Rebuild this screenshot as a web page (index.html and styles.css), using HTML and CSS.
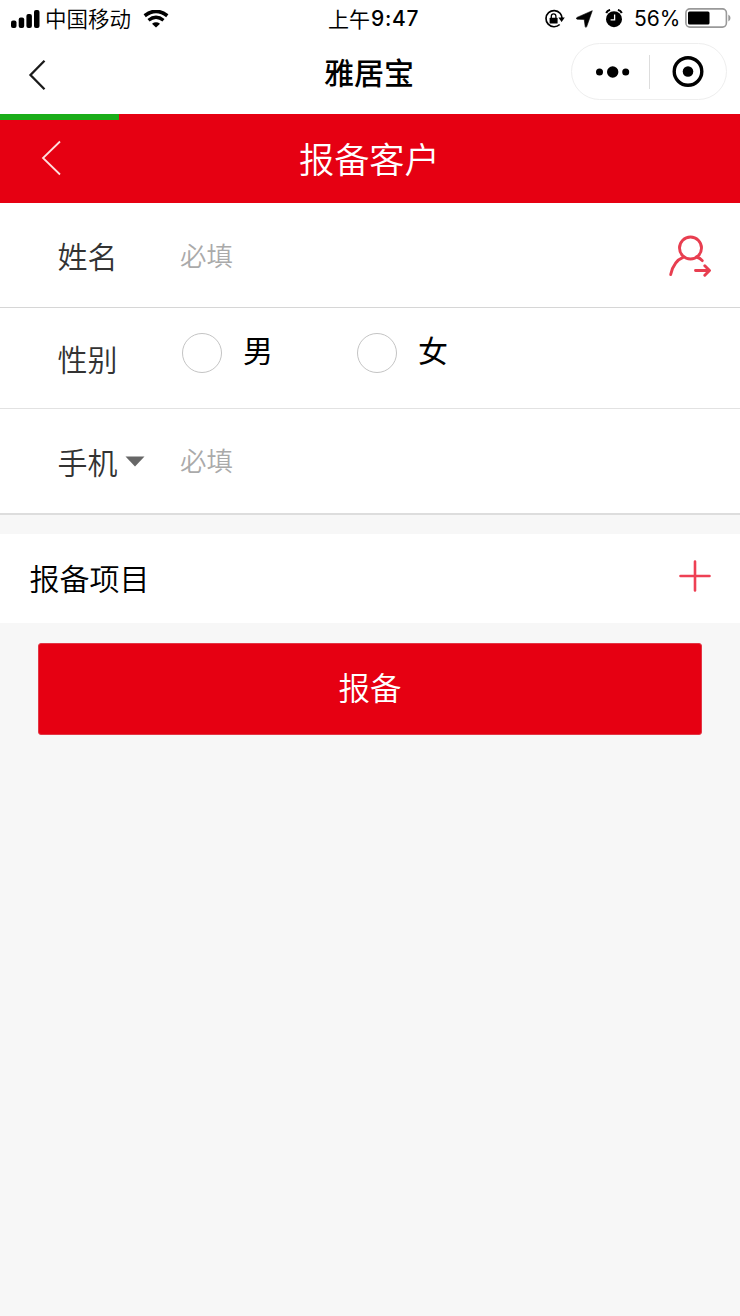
FILE: index.html
```
<!DOCTYPE html>
<html lang="zh-CN">
<head>
<meta charset="utf-8">
<title>雅居宝</title>
<link rel="stylesheet" href="styles.css">
</head>
<body>
<header class="status">
  <div class="status-left">
    <svg class="signal" width="29" height="18" viewBox="0 0 29 18"><rect x="0" y="10.500" width="5.500" height="7.500" rx="2"/><rect x="7.700" y="7.500" width="5.500" height="10.500" rx="2"/><rect x="15.400" y="4" width="5.500" height="14" rx="2"/><rect x="23" y="0" width="5.500" height="18" rx="2"/></svg>
    <span class="carrier">中国移动</span>
    <svg class="wifi" width="26" height="18" viewBox="0 0 26 18"><path d="M1.700 5.700Q13 -3 24.300 5.700" fill="none" stroke="#000" stroke-width="3.600"/><path d="M5.500 10.300Q13 4.200 20.500 10.300" fill="none" stroke="#000" stroke-width="3.300"/><path d="M13 17.600L9 13.700Q13 10.900 17 13.700Z"/></svg>
  </div>
  <div class="clock"><span class="clock-period">上午</span><span class="clock-time">9:47</span></div>
  <div class="status-right">
    <svg class="rotation" width="21" height="20" viewBox="0 0 21 20"><path d="M16.100 4.200A8.100 8.100 0 1 0 15.700 15.500M16.100 4.200A8.100 8.100 0 0 1 18 9" fill="none" stroke="#000" stroke-width="1.700"/><path d="M14.400 8.600H20.800L17.600 13Z"/><rect x="5.600" y="8.700" width="8" height="5.900" rx=".7"/><path d="M7.300 9V7.200a2.300 2.300 0 0 1 4.600 0V9" fill="none" stroke="#000" stroke-width="1.300"/></svg>
    <svg class="locator" width="17" height="18" viewBox="0 0 17 18"><path d="M16.300 .7L10.700 16.600Q9.900 18.200 9.200 16.600L8.200 9.400L1.200 9.200Q-.6 8.600 1 7.400Z" stroke="#000" stroke-width=".6"/></svg>
    <svg class="alarm" width="18" height="19" viewBox="0 0 18 19"><circle cx="9" cy="10.200" r="8"/><path d="M1.200 4Q2.300 1.700 5.100 .9M16.800 4Q15.700 1.700 12.900 .9" fill="none" stroke="#000" stroke-width="2"/><path d="M9.600 5.600V10.800H5.600" fill="none" stroke="#fff" stroke-width="1.300"/></svg>
    <span class="percent">56%</span>
    <svg class="battery" width="46" height="20" viewBox="0 0 46 20"><rect x=".9" y=".9" width="40.500" height="18.200" rx="4" fill="#fff" stroke="#999" stroke-width="1.600"/><rect x="3" y="3.500" width="21.500" height="13" rx="1.500"/><path d="M43.300 6.500Q45.500 7.500 45.500 10T43.300 13.500Z" fill="#999"/></svg>
  </div>
</header>

<nav class="appbar">
  <svg class="back" width="20" height="32" viewBox="0 0 20 32"><path d="M16.500 1.700L2.500 16L16.500 30.300" fill="none" stroke="#1a1a1a" stroke-width="2.300"/></svg>
  <h1 class="app-title">雅居宝</h1>
  <div class="capsule">
    <svg class="more" width="36" height="14" viewBox="0 0 36 14"><circle cx="4.500" cy="7" r="3.500"/><circle cx="17.700" cy="7" r="5.700"/><circle cx="30.700" cy="7" r="3.500"/></svg>
    <span class="capsule-line"></span>
    <svg class="target" width="32" height="32" viewBox="0 0 32 32"><circle cx="16" cy="15.500" r="13.800" fill="none" stroke="#000" stroke-width="3.400"/><circle cx="16" cy="15.500" r="5.300"/></svg>
  </div>
</nav>

<section class="page-head">
  <div class="progress"></div>
  <svg class="head-back" width="22" height="36" viewBox="0 0 22 36"><path d="M19 1.500L2 18L19 34.500" fill="none" stroke="#ffdede" stroke-width="1.800"/></svg>
  <h2 class="head-title">报备客户</h2>
</section>

<main>
  <div class="row row-name">
    <span class="label">姓名</span>
    <span class="placeholder">必填</span>
    <svg class="contact" width="44" height="42" viewBox="0 0 44 42"><g fill="none" stroke="#e83e50" stroke-width="2.900" stroke-linecap="round" stroke-linejoin="round"><circle cx="22.500" cy="13" r="11"/><path d="M2.700 39.500C4.500 31 9 24.800 15.500 22.200M28.500 22Q32 23 34.300 25.600"/><path d="M27.500 35.500H41M36.800 30.800L41.500 35.500L36.800 40.200"/></g></svg>
  </div>
  <div class="row row-gender">
    <span class="label">性别</span>
    <span class="radio"></span><span class="option">男</span>
    <span class="radio radio-second"></span><span class="option">女</span>
  </div>
  <div class="row row-phone">
    <span class="label">手机</span>
    <svg class="caret" width="20" height="11" viewBox="0 0 20 11"><path d="M.5 .5H19.500L10 10.500Z" fill="#666"/></svg>
    <span class="placeholder">必填</span>
  </div>
  <div class="project">
    <span class="project-label">报备项目</span>
    <svg class="plus" width="32" height="32" viewBox="0 0 32 32"><path d="M16 1.500V30.500M1.500 16H30.500" fill="none" stroke="#ee4054" stroke-width="2.600" stroke-linecap="round"/></svg>
  </div>
  <div class="submit">报备</div>
</main>
</body>
</html>
```
FILE: styles.css
```
* { box-sizing: border-box; }
body {
  margin: 0;
  min-height: 1316px;
  background: #f7f7f7;
  color: #000;
  font-family: "Noto Sans CJK SC", sans-serif;
}
svg { display: block; flex: none; }
h1, h2 { margin: 0; font-weight: 400; }

.status {
  height: 37px;
  display: grid;
  grid-template-columns: 328px 216px 196px;
  background: #fff;
}
.status-left, .status-right, .clock { display: flex; align-items: center; }
.status-left { padding-left: 11px; }
.carrier { margin-left: 5px; font-size: 21.5px; font-weight: 350; line-height: 34px; padding-bottom: 2px; }
.wifi { margin-left: 12px; }
.clock-period { font-size: 21px; line-height: 34px; padding-bottom: 2px; }
.clock-time { font: 500 21px/36px Inter, sans-serif; letter-spacing: .7px; margin-left: 1px; }
.locator { margin-left: 11px; }
.alarm { margin-left: 12px; }
.percent { width: 50px; margin-left: 11px; font: 400 21px/36px Inter, sans-serif; }
.battery { margin: -1px 0 0 1px; }

.appbar {
  height: 77px;
  display: grid;
  grid-template-columns: 324px 247px 156px;
  padding-top: 6px;
  background: #fff;
}
.back { margin: 16px 0 0 28px; }
.app-title { font-size: 30px; font-weight: 500; line-height: 56px; }
.capsule {
  height: 57px;
  display: flex;
  align-items: center;
  border: 1px solid #eee;
  border-radius: 29px;
}
.more { margin-left: 23px; }
.capsule-line { width: 1px; height: 34px; margin-left: 18px; background: #ddd; }
.target { margin-left: 22px; }

.page-head {
  height: 89px;
  display: grid;
  grid-template: 6px 83px / 299px 1fr;
  background: #e60012;
}
.progress { grid-column: 1 / 3; width: 119px; background: #1aad19; }
.head-back { margin: 20px 0 0 41px; }
.head-title { font-size: 35.2px; font-weight: 350; line-height: 76px; color: #fff; }

.row {
  display: flex;
  align-items: flex-start;
  padding-left: 57.500px;
  background: #fff;
  border-bottom: 1px solid #d6d6d6;
}
.label { width: 122.500px; font-size: 30px; font-weight: 350; color: #333; }
.placeholder { font-size: 26.5px; font-weight: 350; color: #aaa; }
.row-name { height: 105px; line-height: 104px; }
.row-name .placeholder { line-height: 103px; }
.contact { margin: 32px 0 0 435px; }
.row-gender { height: 101px; line-height: 101px; border-color: #e2e2e2; }
.radio { width: 40px; height: 40px; margin: 25px 0 0 2px; border: 1.500px solid #c4c4c4; border-radius: 50%; }
.option { width: 30px; margin-left: 21px; font-size: 30px; line-height: 82px; }
.radio-second { margin-left: 84px; }
.row-phone { height: 106px; line-height: 105px; border-bottom-width: 2px; border-color: #ddd; }
.row-phone .label { width: 67.500px; }
.row-phone .placeholder { margin-left: 35px; line-height: 102px; }
.caret { margin-top: 47px; }

.project {
  height: 89px;
  margin-top: 19px;
  display: flex;
  padding: 0 29px 0 29.500px;
  justify-content: space-between;
  background: #fff;
}
.project-label { font-size: 30px; line-height: 87px; font-weight: 350; }
.plus { margin-top: 26px; }
.submit {
  height: 92px;
  margin: 20px 38px 0;
  border: 1px solid #e33645;
  border-radius: 3px;
  background: #e60012;
  color: #fff;
  font-size: 31.5px;
  font-weight: 350;
  line-height: 85px;
  text-align: center;
}
```
